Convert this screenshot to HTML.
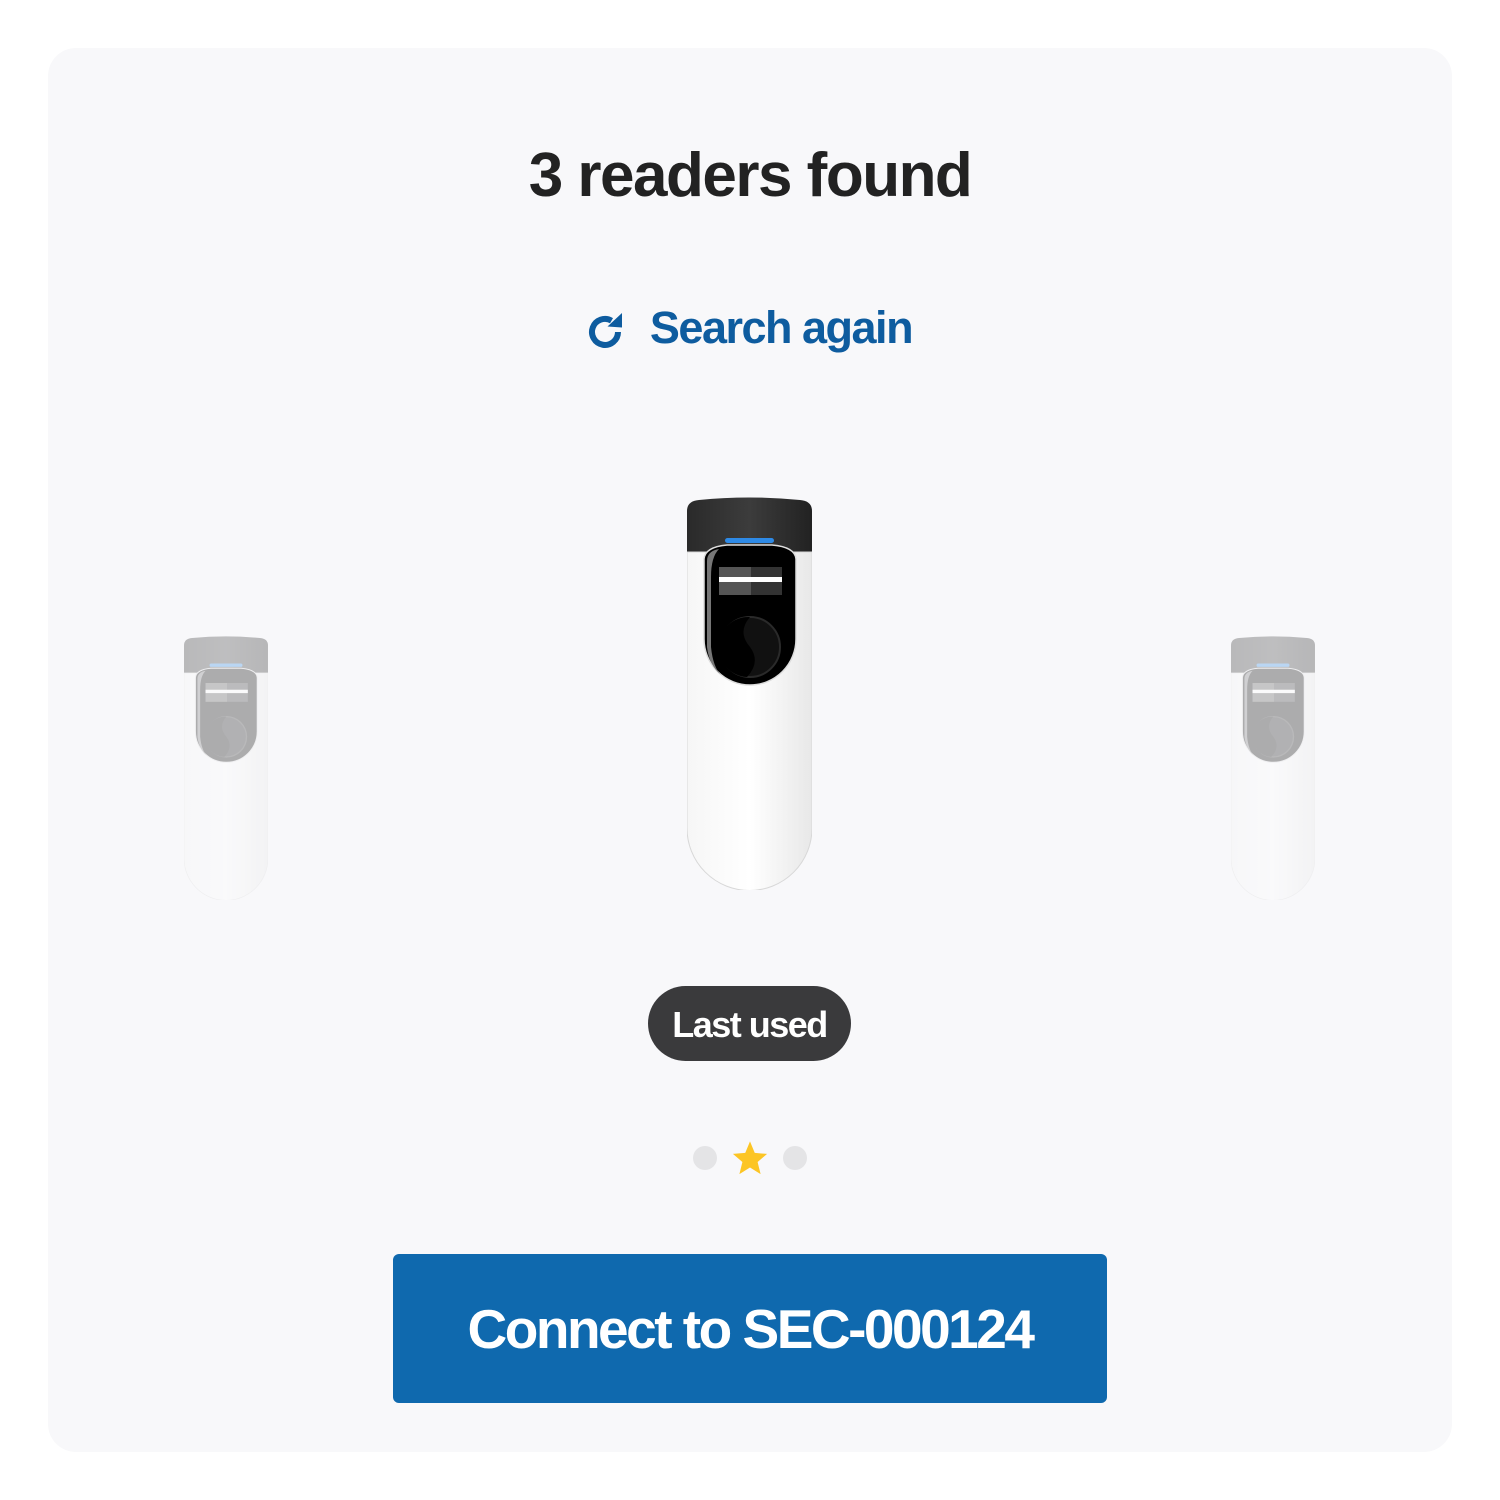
<!DOCTYPE html>
<html><head><meta charset="utf-8">
<style>
html,body{margin:0;padding:0;background:#fff;width:1500px;height:1500px;overflow:hidden;font-family:"Liberation Sans",sans-serif;}
.card{position:absolute;left:48px;top:48px;width:1404px;height:1404px;background:#f8f8fa;border-radius:28px;}
.title{position:absolute;left:0;top:140px;width:1500px;text-align:center;font-size:62px;font-weight:bold;color:#222;letter-spacing:-1.5px;}
.search{position:absolute;left:0;top:302px;width:1500px;text-align:center;font-size:45px;font-weight:bold;color:#0e5c9f;letter-spacing:-1.5px;}
.search svg{vertical-align:-5px;margin-right:26px;}
.pill{position:absolute;left:648px;top:986px;width:203px;height:75px;border-radius:38px;background:#3a3a3c;color:#fff;font-size:36px;font-weight:bold;text-align:center;line-height:77px;letter-spacing:-1.5px;}
.btn{position:absolute;left:393px;top:1254px;width:714px;height:149px;border-radius:6px;background:#0f69ae;color:#fff;font-size:55px;font-weight:bold;text-align:center;line-height:151px;letter-spacing:-2.5px;}
.dot{position:absolute;width:24px;height:24px;border-radius:50%;background:#e4e4e6;top:1146px;}
</style></head><body>
<svg width="0" height="0" style="position:absolute">
<defs>
<linearGradient id="bd" x1="0" x2="1"><stop offset="0" stop-color="#f6f6f6"/><stop offset=".5" stop-color="#fff"/><stop offset="1" stop-color="#e8e8e8"/></linearGradient>
<linearGradient id="cp" x1="0" x2="1"><stop offset="0" stop-color="#2a2a2a"/><stop offset=".5" stop-color="#3c3c3c"/><stop offset="1" stop-color="#222"/></linearGradient>
<symbol id="dev" viewBox="0 0 125 393">
<path d="M0 14 Q0 4 12 3 Q62 -2 113 3 Q125 4 125 14 L125 60 L0 60 Z" fill="url(#cp)"/>
<path d="M0 55 L125 55 L125 331 A62.5 62.5 0 0 1 0 331 Z" fill="url(#bd)" stroke="#d8d8d8" stroke-width="1"/>
<path d="M17 62 Q18 50 40 48 L85 48 Q108 50 109 62 L109 142 A46 46 0 0 1 17 142 Z" fill="#000" stroke="#ddd" stroke-width="1.5"/>
<path d="M20 64 Q20 54 32 52 Q24 60 24 80 L24 150 Q26 170 34 178 Q22 168 20 150Z" fill="#777"/>
<rect x="38" y="41" width="49" height="5" rx="2.5" fill="#2e8ae6"/>
<rect x="32" y="70" width="32" height="28" fill="#555"/>
<rect x="64" y="70" width="31" height="28" fill="#333"/>
<rect x="32" y="80" width="63" height="5" fill="#fff"/>
<circle cx="63" cy="150" r="30" fill="#111" stroke="#2a2a2a" stroke-width="2"/>
<path d="M63 120 Q50 135 63 150 Q74 165 60 180 A30 30 0 0 1 63 120Z" fill="#000"/>
</symbol>
</defs></svg>
<div class="card"></div>
<div class="title">3 readers found</div>
<div class="search"><svg width="36" height="36" viewBox="0 0 36 36"><path d="M30 20 A13 13 0 1 1 23.5 8.7" fill="none" stroke="#0e5c9f" stroke-width="6"/><path d="M34 1 L34 15.5 L19.5 14.5Z" fill="#0e5c9f"/></svg>Search again</div>
<svg style="position:absolute;left:687px;top:497px" width="125" height="393"><use href="#dev"/></svg>
<svg style="position:absolute;left:184px;top:636px;opacity:.3" width="84" height="264" viewBox="0 0 125 393"><use href="#dev"/></svg>
<svg style="position:absolute;left:1231px;top:636px;opacity:.3" width="84" height="264" viewBox="0 0 125 393"><use href="#dev"/></svg>
<div class="pill">Last used</div>
<div class="dot" style="left:693px"></div>
<div class="dot" style="left:783px"></div>
<svg style="position:absolute;left:731px;top:1139px" width="38" height="38" viewBox="0 0 24 24"><path d="M12 1.5 L15 8.8 L22.8 9.4 L16.8 14.5 L18.7 22.2 L12 18 L5.3 22.2 L7.2 14.5 L1.2 9.4 L9 8.8Z" fill="#fcc524"/></svg>
<div class="btn">Connect to SEC-000124</div>
</body></html>
